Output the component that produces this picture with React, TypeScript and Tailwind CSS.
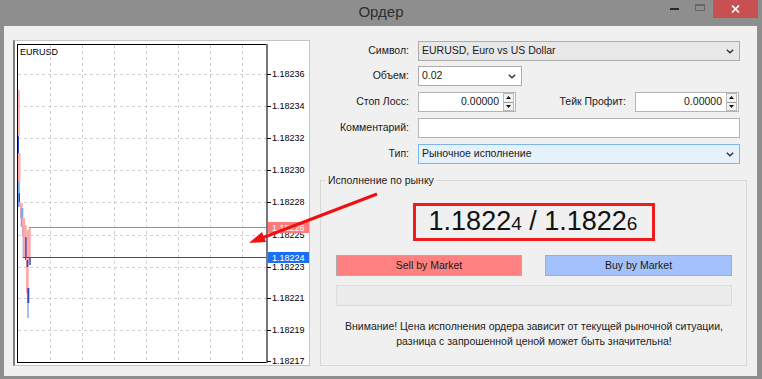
import React from 'react';

type Bar = [number, number, number, number, string];

const PINK = '#ffa9a9';
const RED = '#ee5a5a';
const LBLUE = '#7aa7f5';
const DBLUE = '#2f45bd';
const PURP = '#6a55b5';

// tick bars, in window pixels (the svg viewBox starts at the chart content corner)
const bars: Bar[] = [
  [17, 90, 1.3, 46, RED],
  [18.3, 90, 1.5, 46, PINK],
  [17, 136, 2, 17, DBLUE],
  [17, 153, 3.5, 29, PINK],
  [17, 160, 1, 22, RED],
  [17.3, 182, 2.5, 25, LBLUE],
  [18.7, 193, 1.3, 9, DBLUE],
  [20, 203, 2.7, 15, PINK],
  [20.7, 208, 2.6, 19, LBLUE],
  [22, 218, 3, 19, PINK],
  [22.7, 227, 1.3, 30, LBLUE],
  [23.3, 225, 3.4, 32, PINK],
  [25, 237, 2.3, 23, PURP],
  [26.7, 230, 3.3, 30, PINK],
  [28.7, 227, 2, 30, PINK],
  [26, 257, 2.7, 36, PINK],
  [26.7, 260, 1.6, 7, DBLUE],
  [27.3, 288, 2, 15, DBLUE],
  [27.3, 303, 1.4, 15, LBLUE],
  [29.3, 257, 1.4, 8, DBLUE],
];

const levels: [number, string][] = [
  [74, '1.18236'],
  [106, '1.18234'],
  [138, '1.18232'],
  [170, '1.18230'],
  [202, '1.18228'],
  [235, '1.18225'],
  [267, '1.18223'],
  [298, '1.18221'],
  [330, '1.18219'],
  [361, '1.18217'],
];

const vgrid = [50, 82, 114, 146, 178, 210, 242];

const Chart = () => (
  <svg width="294" height="324" viewBox="15 41 294 324" className="block">
    {vgrid.map((x) => (
      <line key={x} x1={x + 0.5} y1={45} x2={x + 0.5} y2={362} stroke="#cfcfcf" strokeDasharray="3 3" />
    ))}
    {levels.slice(0, 9).map(([y]) => (
      <line key={y} x1={18} y1={y + 0.5} x2={266} y2={y + 0.5} stroke="#cfcfcf" strokeDasharray="3 3" />
    ))}
    <text x={20} y={52} fontSize={9} fontFamily="Liberation Sans, Arial, sans-serif" dominantBaseline="central" fill="#000">
      EURUSD
    </text>
    {bars.map(([x, y, w, h, c], i) => (
      <rect key={i} x={x} y={y} width={w} height={h} fill={c} />
    ))}
    <line x1={29} y1={227.5} x2={267} y2={227.5} stroke="#f06a6a" />
    <line x1={22.7} y1={257.5} x2={267} y2={257.5} stroke="#1652d8" strokeWidth={1.2} />
    <rect x={17.5} y={44.5} width={249.5} height={318} fill="none" stroke="#000" />
    <line x1={267} y1={44} x2={267} y2={363} stroke="#777" strokeWidth={2} />
    {levels.map(([y, t]) => (
      <g key={t}>
        <line x1={267} y1={y + 0.5} x2={271} y2={y + 0.5} stroke="#000" />
        <text x={272} y={y} fontSize={9} fontFamily="Liberation Sans, Arial, sans-serif" dominantBaseline="central" fill="#000">
          {t}
        </text>
      </g>
    ))}
    <rect x={268} y={222} width={41} height={11} fill="#ff7b7b" />
    <text x={272} y={227.5} fontSize={9} fontFamily="Liberation Sans, Arial, sans-serif" dominantBaseline="central" fill="#fff">
      1.18226
    </text>
    <rect x={268} y={252} width={41} height={11} fill="#1c6ff0" />
    <text x={272} y={257.5} fontSize={9} fontFamily="Liberation Sans, Arial, sans-serif" dominantBaseline="central" fill="#fff">
      1.18224
    </text>
  </svg>
);

const Chevron = () => (
  <svg width="8" height="5" viewBox="0 0 8 5" className="shrink-0">
    <polyline points="0.8,0.8 4,3.8 7.2,0.8" fill="none" stroke="#333" strokeWidth="1.4" />
  </svg>
);

const Spinner = () => (
  <div className="w-[11px] h-[18px] mr-[1px] flex flex-col border border-[#b9b9b9] bg-[#f3f3f3] shrink-0">
    <div className="flex-1 flex items-center justify-center border-b border-[#9a9a9a]">
      <svg width="5" height="3" viewBox="0 0 5 3"><polygon points="0,3 2.5,0 5,3" fill="#111" /></svg>
    </div>
    <div className="flex-1 flex items-center justify-center">
      <svg width="5" height="3" viewBox="0 0 5 3"><polygon points="0,0 2.5,3 5,0" fill="#111" /></svg>
    </div>
  </div>
);

const SpinBox = ({ w }: { w: string }) => (
  <div className={`${w} h-[20px] flex items-center bg-white border border-[#b4b4b4]`}>
    <div className="flex-1 text-right pr-[4px]">0.00000</div>
    <Spinner />
  </div>
);

const Label = ({ children }: { children: React.ReactNode }) => (
  <div className="w-[89px] shrink-0 text-right">{children}</div>
);

export default function App() {
  return (
    <div className="relative w-[762px] h-[379px] overflow-hidden bg-[#8e8e8e] flex flex-col font-['Liberation_Sans',Arial,sans-serif] text-[10.5px] text-[#1a1a1a]">
      {/* title bar */}
      <div className="h-[26px] shrink-0 grid grid-cols-[1fr_auto_1fr] items-start">
        <div />
        <div className="text-[15px] leading-[24px] text-[#2f2f2f]">Ордер</div>
        <div className="flex justify-end items-start pr-[4px]">
          <div className="w-[26px] h-[17px] flex items-start justify-center">
            <div className="w-[9px] h-[2px] mt-[8px] bg-[#2b2b2b]" />
          </div>
          <div className="w-[26px] h-[17px] flex items-start justify-center">
            <div className="w-[10px] h-[7px] mt-[4px] border border-[#666] border-t-2" />
          </div>
          <div className="w-[45px] h-[18px] bg-[#c75050] flex items-center justify-center">
            <svg width="9" height="8" viewBox="0 0 9 8">
              <path d="M1 0.5 L8 7.5 M8 0.5 L1 7.5" stroke="#fff" strokeWidth="1.7" />
            </svg>
          </div>
        </div>
      </div>

      {/* client area */}
      <div className="ml-[4px] mr-[5px] h-[350px] bg-[#f0f0f0] flex pt-[14px] pl-[9px] pr-[10px] pb-[10px]">
        <div className="w-[297px] h-[326px] shrink-0 bg-white border border-[#c4c4c4] border-l-2 border-l-[#7d7d7d]">
          <Chart />
        </div>

        <div className="ml-[10px] flex-1 flex flex-col">
          <div className="mt-[1px] flex items-center h-[20px]">
            <Label>Символ:</Label>
            <div className="ml-[9px] w-[322px] h-[20px] flex items-center justify-between pl-[3px] pr-[5px] bg-[#e8e8e8] border border-[#acacac]">
              <span>EURUSD, Euro vs US Dollar</span>
              <Chevron />
            </div>
          </div>

          <div className="mt-[5px] flex items-center h-[20px]">
            <Label>Объем:</Label>
            <div className="ml-[9px] w-[104px] h-[20px] flex items-center justify-between pl-[3px] pr-[5px] bg-white border border-[#acacac]">
              <span>0.02</span>
              <Chevron />
            </div>
          </div>

          <div className="mt-[6px] flex items-center h-[20px] pr-[8px]">
            <Label>Стоп Лосс:</Label>
            <div className="ml-[9px]">
              <SpinBox w="w-[98px]" />
            </div>
            <div className="flex-1 text-right">Тейк Профит:</div>
            <div className="ml-[9px]">
              <SpinBox w="w-[104px]" />
            </div>
          </div>

          <div className="mt-[6px] flex items-center h-[20px]">
            <Label>Комментарий:</Label>
            <div className="ml-[9px] w-[322px] h-[20px] bg-white border border-[#b4b4b4]" />
          </div>

          <div className="mt-[6px] flex items-center h-[20px]">
            <Label>Тип:</Label>
            <div className="ml-[9px] w-[322px] h-[20px] flex items-center justify-between pl-[3px] pr-[5px] bg-[#e5f1fb] border border-[#7eb4ea]">
              <span>Рыночное исполнение</span>
              <Chevron />
            </div>
          </div>

          <fieldset className="mt-[10px] flex-1 border border-[#d8d8d8]">
            <legend className="ml-[5px] px-[2px] leading-[12px] text-[#222]">Исполнение по рынку</legend>
            <div className="flex flex-col pl-[15px] pr-[14px]">
              <div className="mt-[17px] mx-auto w-[242px] h-[38px] border-[3px] border-[#ee1c1c] flex items-center justify-center text-[27px] leading-[32px] text-[#111] pr-[2px]">
                <span>
                  1.1822<span className="text-[19px]">4</span> / 1.1822<span className="text-[19px]">6</span>
                </span>
              </div>
              <div className="mt-[14px] flex justify-between">
                <div className="w-[186px] h-[21px] flex items-center justify-center bg-[#ff8080] border border-[#adadad]">
                  Sell by Market
                </div>
                <div className="w-[187px] h-[21px] flex items-center justify-center bg-[#a3c1fa] border border-[#adadad]">
                  Buy by Market
                </div>
              </div>
              <div className="mt-[9px] h-[21px] bg-[#ececec] border border-[#dcdcdc]" />
              <div className="mt-[13px] text-center leading-[15px] text-[#222]">
                Внимание! Цена исполнения ордера зависит от текущей рыночной ситуации,
                <br />
                разница с запрошенной ценой может быть значительна!
              </div>
            </div>
          </fieldset>
        </div>
      </div>

      {/* annotation arrow */}
      <svg className="absolute inset-0 pointer-events-none" width="762" height="379" viewBox="0 0 762 379">
        <line x1={377} y1={194} x2={262} y2={238} stroke="#ee1111" strokeWidth={3} />
        <polygon points="249,243 266,242 262,232" fill="#ee1111" />
      </svg>
    </div>
  );
}
